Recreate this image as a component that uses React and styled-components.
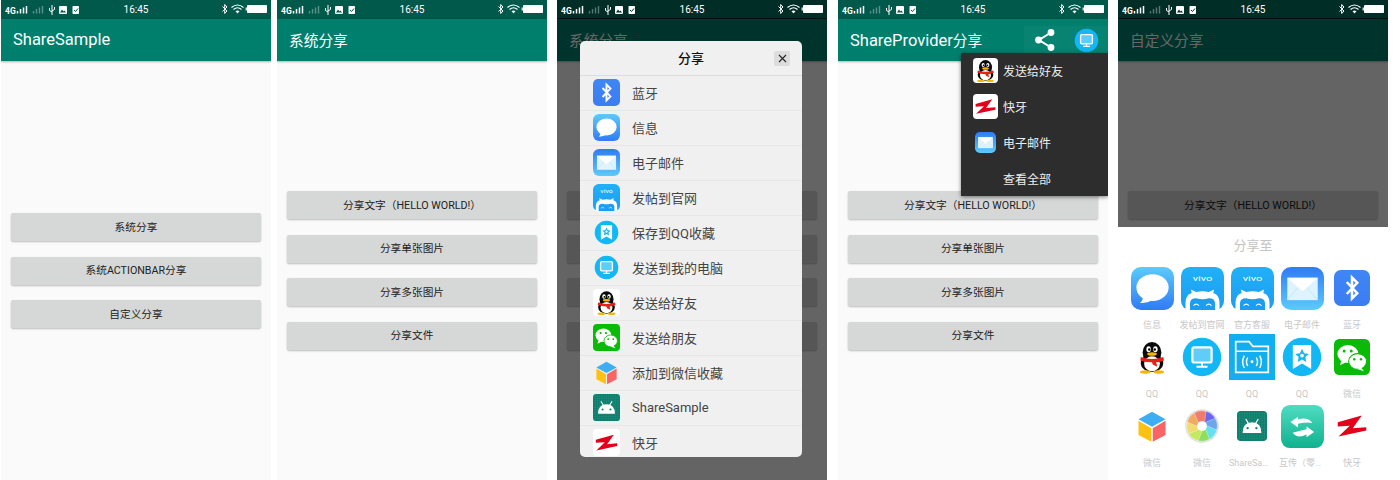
import React from "react";
import styled, { createGlobalStyle } from "styled-components";

const GlobalStyle = createGlobalStyle`
  html, body {
    margin: 0;
    padding: 0;
    background: #fff;
    font-family: Roboto, "Noto Sans CJK SC", sans-serif;
  }
`;

const Grad = ({ id, from, to }) => (
  <defs>
    <linearGradient id={id} x1="0" y1="0" x2="0" y2="1">
      <stop offset="0" stopColor={from} />
      <stop offset="1" stopColor={to} />
    </linearGradient>
  </defs>
);

const btPath = "M17 16 L31 31 L24 38 V10 L31 17 L17 32";

const penguin = (
  <>
    <ellipse cx="24" cy="18" rx="12.5" ry="14" fill="#0b0b0b" />
    <ellipse cx="24" cy="32" rx="15" ry="12" fill="#0b0b0b" />
    <ellipse cx="24" cy="33" rx="10.5" ry="10" fill="#fff" />
    <ellipse cx="19.5" cy="13.5" rx="3" ry="4" fill="#fff" />
    <ellipse cx="28.5" cy="13.5" rx="3" ry="4" fill="#fff" />
    <circle cx="20.3" cy="14" r="1.6" fill="#000" />
    <circle cx="27.7" cy="14" r="1.6" fill="#000" />
    <ellipse cx="24" cy="20" rx="6.5" ry="2.4" fill="#f7b500" />
    <path d="M9 24 Q24 29 39 24 L40 28.5 Q33 31 29.5 31 L31 37 L25 34 L24 31 Q15 31 8.5 28.5 Z" fill="#e2231a" />
    <ellipse cx="15" cy="44" rx="7" ry="2.2" fill="#f7b500" />
    <ellipse cx="33" cy="44" rx="7" ry="2.2" fill="#f7b500" />
  </>
);

const zed = (
  <path d="M5 19 L37 10 L25 27 L43 25.5 L43 30 L6 38 L21 23.5 L5 24.5 Z" fill="#e2001a" />
);

const bubbles = (
  <>
    <ellipse cx="18.5" cy="20" rx="14" ry="12" fill="#fff" />
    <path d="M10 28 L8 35 L16 31 Z" fill="#fff" />
    <ellipse cx="31.5" cy="30" rx="12" ry="10.5" fill="#fff" stroke="#09bb07" strokeWidth="1.5" />
    <path d="M36 38 L40 43 L31 40 Z" fill="#fff" />
    <circle cx="13.5" cy="16" r="2" fill="#09bb07" />
    <circle cx="23" cy="16" r="2" fill="#09bb07" />
    <circle cx="27" cy="27" r="1.6" fill="#09bb07" />
    <circle cx="36" cy="27" r="1.6" fill="#09bb07" />
  </>
);

const androidGrid = [4, 8, 12, 16, 20, 24, 28, 32, 36, 40, 44];

const blades = ["#6a66ee", "#6aa6ea", "#66e0f0", "#8ce05e", "#c6e762", "#f0dc70", "#f0aa62", "#ef7d6c"];

const icons = {
  bluetooth: (
    <>
      <Grad id="gbt" from="#3f86f6" to="#3b7df2" />
      <rect width="48" height="48" rx="9" fill="url(#gbt)" />
      <path d={btPath} fill="none" stroke="#fff" strokeWidth="3.4" />
    </>
  ),
  message: (
    <>
      <Grad id="gmsg" from="#5ccbfb" to="#2f7bf5" />
      <rect width="48" height="48" rx="11" fill="url(#gmsg)" />
      <ellipse cx="24" cy="23" rx="18" ry="15" fill="#fff" />
      <path d="M13 32 Q14 37 10 40 Q18 41 23 37 Z" fill="#fff" />
    </>
  ),
  mail: (
    <>
      <Grad id="gmail" from="#2f7bf5" to="#5ccbfb" />
      <rect width="48" height="48" rx="11" fill="url(#gmail)" />
      <rect x="7" y="12" width="34" height="25" fill="#dff3fd" />
      <path d="M7 12 L24 27 L41 12 Z" fill="#fff" />
      <path d="M7 37 L19 23 M41 37 L29 23" stroke="#bfe4fa" strokeWidth="1" />
    </>
  ),
  vivo: (
    <>
      <Grad id="gvivo" from="#21b0f7" to="#1b9df2" />
      <rect width="48" height="48" rx="10" fill="url(#gvivo)" />
      <text x="13" y="16" textLength="22" lengthAdjust="spacingAndGlyphs" fontFamily="Roboto, sans-serif" fontSize="8" fill="#fff">vivo</text>
      <path d="M5 48 V40 Q5 31 12 29 L11 25 L17 28 Q24 26 31 28 L37 25 L36 29 Q43 31 43 40 V48 Z" fill="#fff" />
      <path d="M10 48 V41 Q10 35 17 35 Q24 37 31 35 Q38 35 38 41 V48 Z" fill="#1b9df2" />
      <path d="M14 43 Q17 40 20 43 M28 43 Q31 40 34 43" fill="none" stroke="#fff" strokeWidth="1.2" />
    </>
  ),
  qqfav: (
    <>
      <circle cx="24" cy="24" r="21" fill="#12b7f5" />
      <path d="M14 11 H34 V37 L24 31 L14 37 Z" fill="#fff" />
      <path d="M24 15 L26.3 20 L31.5 20.6 L27.6 24.1 L28.7 29.4 L24 26.7 L19.3 29.4 L20.4 24.1 L16.5 20.6 L21.7 20 Z" fill="#12b7f5" />
      <circle cx="24" cy="22.5" r="2" fill="#fff" />
    </>
  ),
  qqpc: (
    <>
      <circle cx="24" cy="24" r="21" fill="#12b7f5" />
      <rect x="13.5" y="13.5" width="21" height="16.5" rx="2" fill="#5fcdf8" stroke="#fff" strokeWidth="2.4" />
      <path d="M24 30 V34 M18 34.6 H30" stroke="#fff" strokeWidth="2.2" />
    </>
  ),
  qq: (
    <>
      <rect width="48" height="48" rx="7" fill="#fff" />
      {penguin}
    </>
  ),
  wechat: (
    <>
      <rect width="48" height="48" rx="7" fill="#09bb07" />
      {bubbles}
    </>
  ),
  cube: (
    <>
      <path d="M24 5 L42 15 L24 25 L6 15 Z" fill="#3eaef2" />
      <path d="M6 17 L23 27 V45 L6 36 Z" fill="#fdc113" />
      <path d="M42 17 L25 27 V45 L42 36 Z" fill="#f96464" />
    </>
  ),
  android: (
    <>
      <rect width="48" height="48" rx="6" fill="#0e7c6b" />
      {androidGrid.map((p) => (
        <path key={p} d={`M${p} 0 V48 M0 ${p} H48`} stroke="#2a9583" strokeWidth="0.6" />
      ))}
      <path d="M9 35 Q9 18 24 18 Q39 18 39 35 Z" fill="#fff" />
      <path d="M14 13 L19 21 M34 13 L29 21" stroke="#fff" strokeWidth="1.8" />
      <circle cx="17" cy="27.5" r="1.8" fill="#0e7c6b" />
      <circle cx="31" cy="27.5" r="1.8" fill="#0e7c6b" />
    </>
  ),
  kuaiya: (
    <>
      <rect width="48" height="48" rx="7" fill="#fff" />
      {zed}
    </>
  ),
  transfer: (
    <>
      <Grad id="gtr" from="#4fdcc0" to="#0fb28f" />
      <rect width="48" height="48" rx="10" fill="url(#gtr)" />
      <path d="M10.5 19 L19 13 V16 Q30 13 35 20 Q28 19 19 21 V25 Z" fill="#fff" />
      <path d="M37 30 L28.5 36 V33 Q18 38 13 31 Q20 29 28.5 27 V24 Z" fill="#fff" />
    </>
  ),
  aperture: (
    <>
      <circle cx="24" cy="24" r="22.5" fill="#e2e2e2" />
      {blades.map((c, i) => (
        <path
          key={c}
          d="M24 3.5 A20.5 20.5 0 0 1 38.5 9.5 L30 21 L22 17 Z"
          fill={c}
          stroke="#fff"
          strokeWidth="0.4"
          transform={`rotate(${i * 45 + 15} 24 24)`}
        />
      ))}
      <circle cx="24" cy="24" r="6.5" fill="#fff" />
    </>
  ),
  folder: (
    <>
      <rect width="48" height="48" fill="#12aef0" />
      <path d="M7 40 V8 H21 L25 13 H41 V40 Z" fill="none" stroke="#fff" strokeWidth="1.8" />
      <path d="M7 18 H41" stroke="#fff" strokeWidth="1.8" />
      <circle cx="24" cy="29" r="1.5" fill="#fff" />
      <path d="M19.5 24.5 Q17 29 19.5 33.5 M28.5 24.5 Q31 29 28.5 33.5 M16 22.5 Q12.5 29 16 35.5 M32 22.5 Q35.5 29 32 35.5" fill="none" stroke="#fff" strokeWidth="1.5" />
    </>
  ),
};

const Icon = ({ name, size }) => (
  <svg width={size} height={size} viewBox="0 0 48 48" style={{ display: "block" }}>
    {icons[name]}
  </svg>
);

const Page = styled.div`
  display: flex;
  width: 1400px;
  height: 480px;
  padding-left: 1px;
  box-sizing: border-box;
  overflow: hidden;
`;

const Phone = styled.div`
  position: relative;
  flex: 0 0 270px;
  height: 480px;
  margin-left: ${(p) => p.$gap || 0}px;
  display: flex;
  flex-direction: column;
  background: #fafafa;
  overflow: hidden;
`;

const StatusBarWrap = styled.div`
  flex: 0 0 18px;
  display: grid;
  grid-template-columns: 1fr auto 1fr;
  align-items: center;
  padding: 0 4px;
  background: ${(p) => (p.$dim ? "#012d27" : "#00594b")};
  color: #fff;
`;

const StatusTime = styled.span`
  font-size: 10px;
  line-height: 18px;
`;

const StatusRight = styled.div`
  justify-self: end;
`;

const StatusBar = ({ dim }) => {
  const bg = dim ? "#012d27" : "#00594b";
  return (
    <StatusBarWrap $dim={dim}>
      <svg width="76" height="12" viewBox="0 0 76 12">
        <text x="0" y="9.5" fontFamily="Roboto, sans-serif" fontSize="8.5" fontWeight="700" fill="#fff">4G</text>
        <path d="M12.5 9.5 V7 M15.5 9.5 V5 M18.5 9.5 V3.5 M21.5 9.5 V2" stroke="#fff" strokeWidth="1.5" />
        <path d="M28.5 9.5 V7 M31.5 9.5 V5 M34.5 9.5 V3.5 M37.5 9.5 V2" stroke="#fff" strokeWidth="1.4" opacity="0.35" />
        <path d="M47 1 V11 M44.5 4 V6.5 L47 8 M49.5 3 V5.5 L47 7" fill="none" stroke="#fff" strokeWidth="1" />
        <rect x="54" y="2" width="8" height="8" rx="1" fill="#fff" />
        <path d="M55 8.5 L57 5.5 L58.5 7.5 L59.5 6.5 L61 8.5 Z" fill={bg} />
        <rect x="67.5" y="2" width="6.5" height="8" rx="0.8" fill="#fff" />
        <path d="M69 6 L70.5 7.5 L73 4.5" fill="none" stroke={bg} strokeWidth="1" />
      </svg>
      <StatusTime>16:45</StatusTime>
      <StatusRight>
        <svg width="45" height="12" viewBox="0 0 45 12">
          <path d="M0.5 3.5 L5 8 L2.7 10.5 V1.5 L5 4 L0.5 8.5" fill="none" stroke="#fff" strokeWidth="1" />
          <path d="M9.5 4.5 Q15.5 -0.5 21.5 4.5 M11.5 6.5 Q15.5 3 19.5 6.5" fill="none" stroke="#fff" strokeWidth="1.2" />
          <path d="M13.5 8.3 Q15.5 6.8 17.5 8.3 L15.5 10.5 Z" fill="#fff" />
          <rect x="25" y="2" width="20" height="8" rx="0.8" fill="#fff" />
          <rect x="23.6" y="4.5" width="1.2" height="3" fill="#fff" />
        </svg>
      </StatusRight>
    </StatusBarWrap>
  );
};

const AppBarWrap = styled.div`
  flex: 0 0 42px;
  display: flex;
  align-items: center;
  justify-content: space-between;
  padding-left: 12px;
  background: #007f6d;
  box-shadow: 0 1px 2px rgba(0, 0, 0, 0.3);
  z-index: 1;
`;

const AppTitle = styled.span`
  padding-bottom: 2px;
  color: #fff;
  font-size: ${(p) => (p.$cjk ? 14.7 : 16.5)}px;
  white-space: nowrap;
`;

const TitleCjk = styled.span`
  font-size: 14.7px;
`;

const Body = styled.div`
  flex: 1;
  display: flex;
  flex-direction: column;
  justify-content: center;
  gap: 15.5px;
  padding: 0 10px;
`;

const Btn = styled.div`
  height: 28px;
  padding-bottom: 2px;
  box-sizing: border-box;
  display: flex;
  align-items: center;
  justify-content: center;
  border-radius: 2px;
  background: #d6d7d7;
  box-shadow: 0 1px 2px rgba(0, 0, 0, 0.25);
  color: #222;
  font-size: 10.7px;
`;

const Scrim = styled.div`
  position: absolute;
  inset: 18px 0 0 0;
  z-index: 2;
  background: rgba(0, 0, 0, 0.6);
`;

const Dialog = styled.div`
  position: absolute;
  left: 23px;
  top: 41px;
  width: 222px;
  height: 416px;
  border-radius: 5px;
  overflow: hidden;
  background: #f0f0f0;
  z-index: 3;
`;

const DialogHead = styled.div`
  position: relative;
  height: 33px;
  padding-bottom: 1px;
  display: flex;
  align-items: center;
  justify-content: center;
  border-bottom: 1px solid #dcdcdc;
  color: #111;
  font-size: 13px;
  font-weight: 500;
`;

const CloseBtn = styled.div`
  position: absolute;
  right: 12px;
  top: 10px;
  width: 16px;
  height: 15px;
  display: flex;
  align-items: center;
  justify-content: center;
  border-radius: 2px;
  background: #dcdcdc;
`;

const DialogRow = styled.div`
  height: 32px;
  padding: 0 0 2px 13px;
  display: flex;
  align-items: center;
  gap: 12px;
  border-bottom: 1px solid #e6e6e6;
  color: #444;
  font-size: 13px;
`;

const shareRows = [
  ["bluetooth", "蓝牙"],
  ["message", "信息"],
  ["mail", "电子邮件"],
  ["vivo", "发帖到官网"],
  ["qqfav", "保存到QQ收藏"],
  ["qqpc", "发送到我的电脑"],
  ["qq", "发送给好友"],
  ["wechat", "发送给朋友"],
  ["cube", "添加到微信收藏"],
  ["android", "ShareSample"],
  ["kuaiya", "快牙"],
];

const ActionGroup = styled.div`
  height: 28px;
  display: flex;
  align-items: center;
  align-self: flex-end;
  margin-bottom: 7px;
  padding: 0 8px 0 9px;
  gap: 16px;
  background: rgba(255, 255, 255, 0.03);
`;

const Popup = styled.div`
  position: absolute;
  right: 0;
  top: 53px;
  width: 147px;
  background: #2d2d2d;
  box-shadow: 0 1px 4px rgba(0, 0, 0, 0.5);
  z-index: 3;
`;

const PopupRow = styled.div`
  height: 36px;
  padding: 0 0 2px 12px;
  box-sizing: border-box;
  display: flex;
  align-items: center;
  gap: 5px;
  color: #eee;
  font-size: 12px;
`;

const PopupIcon = styled.div`
  width: 25px;
  display: flex;
  justify-content: center;
`;

const PopupMore = styled(PopupRow)`
  padding: 0 0 0 42px;
  height: 35px;
`;

const Sheet = styled.div`
  position: absolute;
  left: 0;
  right: 0;
  top: 227px;
  bottom: 0;
  z-index: 3;
  background: #fff;
`;

const SheetTitle = styled.div`
  height: 38px;
  padding-bottom: 4px;
  box-sizing: border-box;
  display: flex;
  align-items: center;
  justify-content: center;
  color: #c4c4c4;
  font-size: 13px;
`;

const SheetGrid = styled.div`
  display: grid;
  grid-template-columns: repeat(5, 50px);
  grid-auto-rows: 69px;
  padding-left: 9px;
`;

const Cell = styled.div`
  display: flex;
  flex-direction: column;
  align-items: center;
`;

const CellIcon = styled.div`
  height: 46px;
  display: flex;
  align-items: center;
  justify-content: center;
`;

const CellLabel = styled.div`
  width: 46px;
  margin-top: 7px;
  text-align: center;
  line-height: 14px;
  color: #c8c8c8;
  font-size: 9px;
  white-space: nowrap;
  overflow: hidden;
  text-overflow: ellipsis;
`;

const gridItems = [
  ["message", "信息", 43],
  ["vivo", "发帖到官网", 43],
  ["vivo", "官方客服", 43],
  ["mail", "电子邮件", 43],
  ["bluetooth", "蓝牙", 36],
  ["qq", "QQ", 36],
  ["qqpc", "QQ", 44],
  ["folder", "QQ", 46],
  ["qqfav", "QQ", 44],
  ["wechat", "微信", 36],
  ["cube", "微信", 36],
  ["aperture", "微信", 36],
  ["android", "ShareSample", 30],
  ["transfer", "互传（零距离）", 43],
  ["kuaiya", "快牙", 36],
];

const SampleButtons = ({ labels }) => (
  <Body>
    {labels.map((l) => (
      <Btn key={l}>{l}</Btn>
    ))}
  </Body>
);

const shareLabels = ["分享文字（HELLO WORLD!）", "分享单张图片", "分享多张图片", "分享文件"];

export default function App() {
  return (
    <>
      <GlobalStyle />
      <Page>
        <Phone>
          <StatusBar />
          <AppBarWrap>
            <AppTitle>ShareSample</AppTitle>
          </AppBarWrap>
          <SampleButtons labels={["系统分享", "系统ACTIONBAR分享", "自定义分享"]} />
        </Phone>

        <Phone $gap={6}>
          <StatusBar />
          <AppBarWrap>
            <AppTitle $cjk>系统分享</AppTitle>
          </AppBarWrap>
          <SampleButtons labels={shareLabels} />
        </Phone>

        <Phone $gap={10}>
          <StatusBar dim />
          <AppBarWrap>
            <AppTitle $cjk>系统分享</AppTitle>
          </AppBarWrap>
          <SampleButtons labels={shareLabels} />
          <Scrim />
          <Dialog>
            <DialogHead>
              分享
              <CloseBtn>
                <svg width="9" height="9" viewBox="0 0 9 9">
                  <path d="M1 1 L8 8 M8 1 L1 8" stroke="#222" strokeWidth="1.1" />
                </svg>
              </CloseBtn>
            </DialogHead>
            {shareRows.map(([icon, label]) => (
              <DialogRow key={label}>
                <Icon name={icon} size={27} />
                {label}
              </DialogRow>
            ))}
          </Dialog>
        </Phone>

        <Phone $gap={11}>
          <StatusBar />
          <AppBarWrap>
            <AppTitle>ShareProvider<TitleCjk>分享</TitleCjk></AppTitle>
            <ActionGroup>
              <svg width="24" height="24" viewBox="0 0 24 24">
                <path d="M18 4.5 L6 12 L18 19.5" fill="none" stroke="#fff" strokeWidth="2" />
                <circle cx="18" cy="4.5" r="3.4" fill="#fff" />
                <circle cx="5.5" cy="12" r="3.4" fill="#fff" />
                <circle cx="18" cy="19.5" r="3.4" fill="#fff" />
              </svg>
              <Icon name="qqpc" size={27} />
            </ActionGroup>
          </AppBarWrap>
          <SampleButtons labels={shareLabels} />
          <Popup>
            <PopupRow>
              <PopupIcon><Icon name="qq" size={25} /></PopupIcon>
              发送给好友
            </PopupRow>
            <PopupRow>
              <PopupIcon><Icon name="kuaiya" size={25} /></PopupIcon>
              快牙
            </PopupRow>
            <PopupRow>
              <PopupIcon><Icon name="mail" size={21} /></PopupIcon>
              电子邮件
            </PopupRow>
            <PopupMore>查看全部</PopupMore>
          </Popup>
        </Phone>

        <Phone $gap={10}>
          <StatusBar dim />
          <AppBarWrap>
            <AppTitle $cjk>自定义分享</AppTitle>
          </AppBarWrap>
          <SampleButtons labels={shareLabels} />
          <Scrim />
          <Sheet>
            <SheetTitle>分享至</SheetTitle>
            <SheetGrid>
              {gridItems.map(([icon, label, size], i) => (
                <Cell key={i}>
                  <CellIcon><Icon name={icon} size={size} /></CellIcon>
                  <CellLabel>{label}</CellLabel>
                </Cell>
              ))}
            </SheetGrid>
          </Sheet>
        </Phone>
      </Page>
    </>
  );
}
